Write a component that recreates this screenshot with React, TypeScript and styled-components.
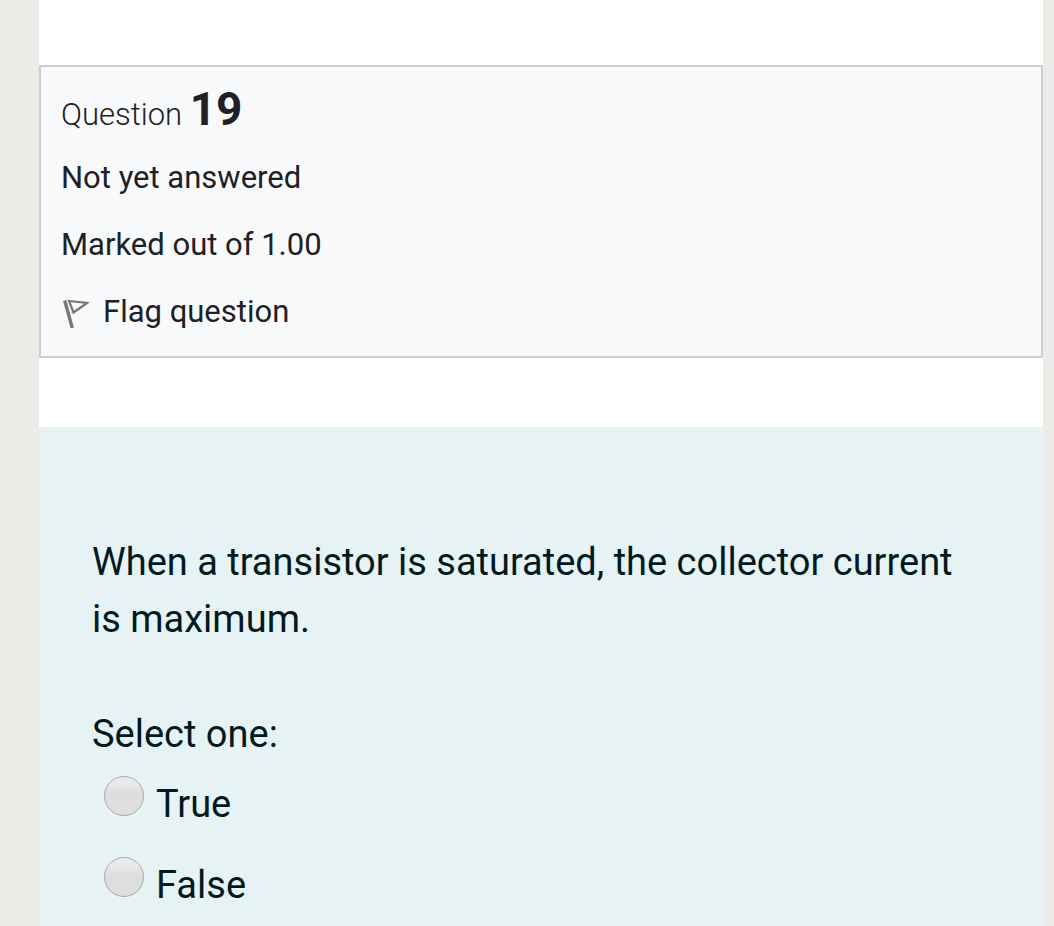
import React from "react";
import styled, { createGlobalStyle } from "styled-components";

const GlobalStyle = createGlobalStyle`
  *, *::before, *::after { box-sizing: border-box; }
  html { background: #ecebe7; }
  body { margin: 0; font-family: Roboto, sans-serif; color: #1d2125; }
`;

const Page = styled.main`
  min-height: 100vh;
  margin: 0 11px 0 39px;
  padding-top: 65px;
  background: #fff;
  display: flex;
  flex-direction: column;
`;

const Info = styled.section`
  padding: 20px 20px 18px;
  border: 2px solid #cacdd1;
  background: #f8f9fb;
  font-size: 31px;
  line-height: 52px;
`;

const Heading = styled.h3`
  margin: 0;
  font-size: 31px;
  font-weight: 300;
  line-height: 44px;
`;

const QuestionNumber = styled.span`
  font-size: 46px;
  font-weight: 700;
`;

const InfoLine = styled.p`
  margin: 15px 0 0;
`;

const FlagLink = styled.a`
  display: flex;
  align-items: center;
  gap: 14px;
  margin-top: 15px;
  color: inherit;
  text-decoration: none;
`;

const Content = styled.form`
  flex: 1;
  margin-top: 69px;
  padding: 107px 53px 10px;
  background: #e7f2f5;
  color: #001a1e;
  font-size: 38px;
  line-height: 57px;
`;

const QuestionText = styled.p`
  margin: 0 0 58px;
`;

const Answers = styled.fieldset`
  margin: 0;
  padding: 0;
  border: 0;
`;

const Legend = styled.legend`
  padding: 0;
`;

const Option = styled.label`
  display: flex;
  align-items: flex-start;
  gap: 12px;
  padding: 13px 12px 11px;
`;

const Radio = styled.input`
  appearance: none;
  flex: none;
  width: 40px;
  height: 40px;
  margin: 0;
  border: 1px solid #a5a9aa;
  border-radius: 50%;
  background: linear-gradient(#ebebeb, #e9e9e9 20%, #dddddd 45%, #dfdfdf);
`;

const FlagIcon = () => (
  <svg width="28" height="32" viewBox="0 0 28 32" fill="none" stroke="#777" aria-hidden="true">
    <path d="M3.7 4.5L11.3 32" strokeWidth="3.4" />
    <path d="M8 5L26 7L12.5 16.5Z" strokeWidth="2.2" />
  </svg>
);

export default function App() {
  return (
    <>
      <GlobalStyle />
      <Page>
        <Info>
          <Heading>Question <QuestionNumber>19</QuestionNumber></Heading>
          <InfoLine>Not yet answered</InfoLine>
          <InfoLine>Marked out of 1.00</InfoLine>
          <FlagLink href="#flag"><FlagIcon />Flag question</FlagLink>
        </Info>
        <Content>
          <QuestionText>When a transistor is saturated, the collector current is maximum.</QuestionText>
          <Answers>
            <Legend>Select one:</Legend>
            <Option><Radio type="radio" name="answer" value="true" />True</Option>
            <Option><Radio type="radio" name="answer" value="false" />False</Option>
          </Answers>
        </Content>
      </Page>
    </>
  );
}
